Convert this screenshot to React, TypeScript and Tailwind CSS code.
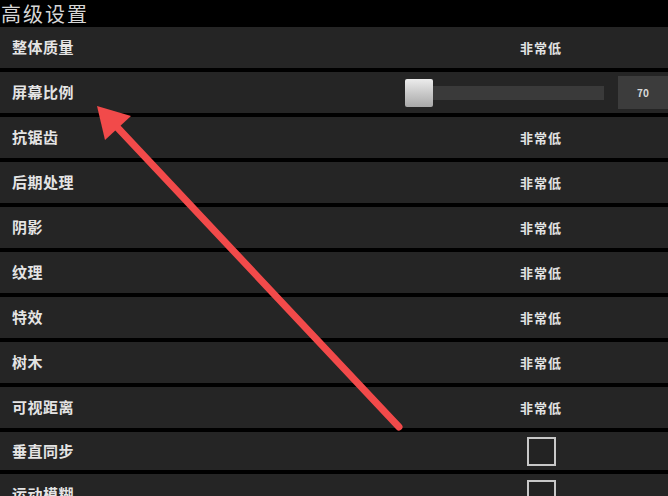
const rows: { label: string; kind: "text" | "slider" | "check" }[] = [
  { label: "整体质量", kind: "text" },
  { label: "屏幕比例", kind: "slider" },
  { label: "抗锯齿", kind: "text" },
  { label: "后期处理", kind: "text" },
  { label: "阴影", kind: "text" },
  { label: "纹理", kind: "text" },
  { label: "特效", kind: "text" },
  { label: "树木", kind: "text" },
  { label: "可视距离", kind: "text" },
  { label: "垂直同步", kind: "check" },
  { label: "运动模糊", kind: "check" },
];

function Control({ kind }: { kind: "text" | "slider" | "check" }) {
  if (kind === "slider") {
    return (
      <div className="flex items-center">
        <div className="flex items-center w-[199px]">
          <div className="w-[28px] h-[28px] rounded-[2px] bg-gradient-to-b from-[#ececec] to-[#a8a8a8]" />
          <div className="flex-1 h-[14px] bg-[#3a3a3a]" />
        </div>
        <div className="ml-[14px] w-[50px] h-[33px] bg-[#3c3c3c] flex items-center justify-center text-[10px] font-bold text-[#d8d8d8]">
          70
        </div>
      </div>
    );
  }
  return (
    <div className="w-[254px] flex justify-center">
      {kind === "text" ? (
        <span className="text-[13px] font-bold text-[#e2e2e2] tracking-[1px]">非常低</span>
      ) : (
        <div className="w-[29px] h-[29px] border-2 border-[#c8c8c8] bg-[#232323]" />
      )}
    </div>
  );
}

export default function App() {
  return (
    <div
      className="relative w-[668px] h-[496px] overflow-hidden bg-black"
      style={{ fontFamily: '"Noto Sans CJK SC", "Noto Sans", sans-serif' }}
    >
      <div className="h-[27px] flex items-center pl-[1px] pt-[1px] text-[20px] leading-none text-[#d6d6d6] tracking-[2px]">
        高级设置
      </div>
      <div className="flex flex-col gap-[4px]">
        {rows.map((r, i) => (
          <div
            key={r.label}
            className={
              i === 9
                ? "h-[38px] shrink-0 bg-[#252525] flex items-center"
                : "h-[41px] shrink-0 bg-[#252525] flex items-center"
            }
          >
            <div className="flex-1 pl-[12px] text-[15px] font-bold text-[#e4e4e4] tracking-[0.5px]">
              {r.label}
            </div>
            <Control kind={r.kind} />
          </div>
        ))}
      </div>

      {/* red annotation arrow */}
      <svg className="absolute inset-0 pointer-events-none" width="668" height="496" viewBox="0 0 668 496">
        <line x1="399" y1="427" x2="116" y2="126" stroke="#f24a4a" strokeWidth="7" strokeLinecap="round" />
        <polygon points="97,106 131,116 105,140" fill="#f24a4a" />
      </svg>
    </div>
  );
}
